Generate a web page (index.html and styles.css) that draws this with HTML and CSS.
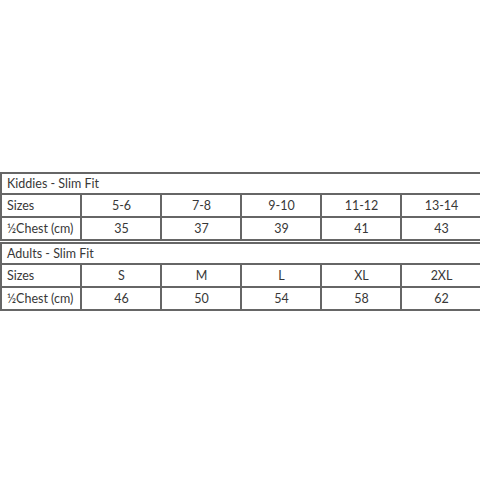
FILE: index.html
```html
<!DOCTYPE html>
<html>
<head>
<meta charset="utf-8">
<link rel="stylesheet" href="styles.css">
</head>
<body>
<div class="page">
  <table class="chart">
    <colgroup><col><col><col><col><col><col></colgroup>
    <tr class="title"><td colspan="6">Kiddies - Slim Fit</td></tr>
    <tr><td class="label">Sizes</td><td>5-6</td><td>7-8</td><td>9-10</td><td>11-12</td><td>13-14</td></tr>
    <tr><td class="label">½Chest (cm)</td><td>35</td><td>37</td><td>39</td><td>41</td><td>43</td></tr>
  </table>
  <table class="chart">
    <colgroup><col><col><col><col><col><col></colgroup>
    <tr class="title"><td colspan="6">Adults - Slim Fit</td></tr>
    <tr><td class="label">Sizes</td><td>S</td><td>M</td><td>L</td><td>XL</td><td>2XL</td></tr>
    <tr><td class="label">½Chest (cm)</td><td>46</td><td>50</td><td>54</td><td>58</td><td>62</td></tr>
  </table>
</div>
</body>
</html>
```
FILE: styles.css
```css
html, body {
  margin: 0;
  padding: 0;
  background: #fff;
}
.page {
  padding-top: 172px;
  display: flex;
  flex-direction: column;
  gap: 1px;
}
.chart {
  width: 480px;
  border-collapse: collapse;
  table-layout: fixed;
  font-family: "Lato", "Open Sans", sans-serif;
  font-size: 12.5px;
  color: #383838;
}
.chart col {
  width: 80px;
}
.chart td {
  border: 2px solid #666;
  height: 21px;
  padding: 0 4px 0 5px;
  text-align: center;
  line-height: 21px;
  white-space: nowrap;
}
.chart tr.title td {
  height: 19px;
  line-height: 19px;
  text-align: left;
}
.chart td.label {
  text-align: left;
}
```
